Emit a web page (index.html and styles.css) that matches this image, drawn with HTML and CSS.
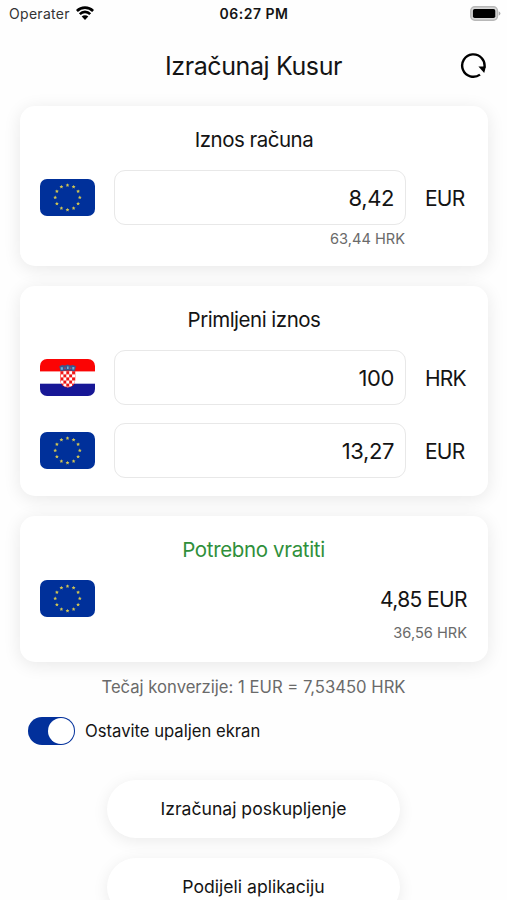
FILE: index.html
```html
<!DOCTYPE html>
<html lang="hr">
<head>
<meta charset="utf-8">
<title>Izračunaj Kusur</title>
<link rel="stylesheet" href="styles.css">
</head>
<body>
<svg class="defs" width="0" height="0" aria-hidden="true">
  <defs>
    <path id="star" d="M0-1.9 .6-.7 1.9-.6 .9.35 1.2 1.6 0 1-1.2 1.6-.9.35-1.9-.6-.6-.7Z"/>
    <symbol id="flag-eu" viewBox="0 0 55 37">
      <rect width="55" height="37" rx="7" fill="#00309a"/>
      <g fill="#d2c552">
        <use href="#star" x="27.5" y="6.2"/><use href="#star" x="33.6" y="7.8"/>
        <use href="#star" x="38.1" y="12.3"/><use href="#star" x="39.8" y="18.5"/>
        <use href="#star" x="38.1" y="24.7"/><use href="#star" x="33.6" y="29.2"/>
        <use href="#star" x="27.5" y="30.8"/><use href="#star" x="21.4" y="29.2"/>
        <use href="#star" x="16.9" y="24.7"/><use href="#star" x="15.2" y="18.5"/>
        <use href="#star" x="16.9" y="12.3"/><use href="#star" x="21.4" y="7.8"/>
      </g>
    </symbol>
    <clipPath id="flag-clip"><rect width="55" height="37" rx="7"/></clipPath>
    <clipPath id="shield"><path d="M20.5 12h14.5v9a7.25 7.25 0 0 1-14.5 0Z"/></clipPath>
    <pattern id="checks" x="20.5" y="12.2" width="5.8" height="6.2" patternUnits="userSpaceOnUse">
      <rect width="5.8" height="6.2" fill="#fff"/>
      <path d="M0 0h2.9v3.1H0ZM2.9 3.1h2.9v3.1H2.9Z" fill="#f01414"/>
    </pattern>
    <symbol id="flag-hr" viewBox="0 0 55 37">
      <g clip-path="url(#flag-clip)">
        <rect width="55" height="37" fill="#fff"/>
        <rect width="55" height="12.4" fill="#fb0404"/>
        <rect y="24.7" width="55" height="12.3" fill="#171796"/>
        <path d="M20.2 12h15.1v9a7.55 7.55 0 0 1-15.1 0Z" fill="#f33"/>
        <rect x="20" y="12" width="16" height="17" fill="url(#checks)" clip-path="url(#shield)"/>
        <path d="M19.2 7.2 22.3 6l2.6.6L27.6 5.6l2.7 1 2.6-.6 3.1 1.2-1.3 5q-7-1.6-14.2 0Z" fill="#38578f"/>
        <path d="M20.7 8.2h2.2v2.5h-2.2ZM27 7.4h1.6v2.6H27ZM32.3 8h2v2.5h-2Z" fill="#6fb5d8"/>
        <path d="M24.3 8.5h1.5v1.6h-1.5ZM29.8 8.5h1.5v1.6h-1.5Z" fill="#b04464"/>
      </g>
    </symbol>
  </defs>
</svg>

<div class="status">
  <div class="status-left">
    <span class="carrier">Operater</span>
    <svg class="wifi" viewBox="0 0 18 14" width="18" height="14">
      <path d="M.9 5a11.6 11.6 0 0 1 16.2 0M3.8 8.1a7.4 7.4 0 0 1 10.4 0" fill="none" stroke="#000" stroke-width="2.7"/>
      <path d="M9 13.9 5.7 10.6a4.7 4.7 0 0 1 6.6 0Z"/>
    </svg>
  </div>
  <span class="time">06:27 PM</span>
  <div class="status-right">
    <svg class="battery" viewBox="0 0 31 15" width="31" height="15">
      <rect x=".8" y=".8" width="26.6" height="13.4" rx="4" fill="#d8d8d8" stroke="#b8b8b8" stroke-width="1.5"/>
      <rect x="2.9" y="2.9" width="22.4" height="9.2" rx="1.8"/>
      <path d="M28.7 5.2q1.7.7 1.7 2.3t-1.7 2.3Z" fill="#aaa"/>
    </svg>
  </div>
</div>

<header class="header">
  <h1 class="title">Izračunaj Kusur</h1>
  <svg class="refresh" viewBox="0 0 26 26" width="26" height="26">
    <path d="M20 21.6A11.2 11.2 0 1 1 24.4 14.5" fill="none" stroke="#000" stroke-width="2.4"/>
    <path d="M18.4 13.4 25.9 13.6 24.2 19.9Z"/>
  </svg>
</header>

<main class="cards">
  <section class="card card-bill">
    <h2 class="label">Iznos računa</h2>
    <div class="row">
      <svg class="flag"><use href="#flag-eu"/></svg>
      <div class="field">8,42</div>
      <span class="currency">EUR</span>
    </div>
    <p class="note note-field"><span>63,44 HRK</span></p>
  </section>

  <section class="card card-received">
    <h2 class="label label-received">Primljeni iznos</h2>
    <div class="row">
      <svg class="flag"><use href="#flag-hr"/></svg>
      <div class="field">100</div>
      <span class="currency">HRK</span>
    </div>
    <div class="row">
      <svg class="flag"><use href="#flag-eu"/></svg>
      <div class="field">13,27</div>
      <span class="currency">EUR</span>
    </div>
  </section>

  <section class="card card-return">
    <h2 class="label label-return">Potrebno vratiti</h2>
    <div class="result">
      <svg class="flag"><use href="#flag-eu"/></svg>
      <span class="amount">4,85 EUR</span>
    </div>
    <p class="note"><span>36,56 HRK</span></p>
  </section>
</main>

<p class="rate"><span>Tečaj konverzije: 1 EUR = 7,53450 HRK</span></p>

<div class="setting">
  <div class="switch"><div class="knob"></div></div>
  <span class="setting-label">Ostavite upaljen ekran</span>
</div>

<div class="actions">
  <div class="button"><span class="button-text">Izračunaj poskupljenje</span></div>
  <div class="button"><span class="button-text">Podijeli aplikaciju</span></div>
</div>
</body>
</html>
```
FILE: styles.css
```css
* { box-sizing: border-box; }
html, body { height: 100%; }
body {
  margin: 0;
  overflow: hidden;
  background: #fefefe;
  color: #141414;
  font-family: Inter, "Liberation Sans", sans-serif;
}
h1, h2, p { margin: 0; font-weight: 400; }
svg { display: block; flex: none; }
.defs { position: absolute; }

.status {
  display: grid;
  grid-template-columns: 1fr auto 1fr;
  align-items: center;
  height: 26px;
  padding: 0 6px 0 9px;
  font-size: 14px;
}
.status-left { display: flex; align-items: center; gap: 6px; }
.status-right { display: flex; justify-content: flex-end; }
.carrier { color: #333; letter-spacing: .3px; }
.time { margin-right: 2px; font-weight: 600; letter-spacing: .5px; }

.header {
  display: grid;
  grid-template-columns: 26px 1fr 26px;
  align-items: center;
  height: 80px;
  padding: 0 21px;
}
.title { grid-column: 2; text-align: center; font-size: 25px; letter-spacing: -.4px; }

.cards { display: grid; gap: 20px; padding: 0 19px 0 20px; }
.card {
  padding: 0 20px;
  border-radius: 15px;
  background: #fff;
  box-shadow: 0 3px 18px rgba(0, 0, 0, .09);
}
.card-bill { height: 160px; }
.card-received { height: 210px; }
.card-return { height: 146px; padding-right: 21px; }
.label { height: 64px; text-align: center; font-size: 20.5px; line-height: 67px; letter-spacing: -.5px; }
.label-return { letter-spacing: -.35px; color: #2f8f3a; }

.row {
  display: grid;
  grid-template-columns: 55px 292px 1fr;
  column-gap: 19px;
  align-items: center;
}
.row + .row { margin-top: 18px; }
.flag { width: 55px; height: 37px; }
.field {
  height: 55px;
  padding-right: 11px;
  border: 1px solid #e8e8e8;
  border-radius: 11px;
  text-align: right;
  font-size: 22px;
  line-height: 54px;
  letter-spacing: -.4px;
}
.currency { padding-top: 1px; font-size: 21px; letter-spacing: -.8px; }
.note { text-align: right; color: #6a6a6a; font-size: 14.6px; line-height: 18px; }
.note-field { padding: 5px 63px 0 0; }

.result { display: flex; align-items: center; justify-content: space-between; height: 37px; }
.amount { padding-top: 1px; font-size: 21px; letter-spacing: -.6px; }
.card-return .note { margin-top: 7px; }

.rate { height: 49px; text-align: center; color: #6a6a6a; font-size: 16.65px; line-height: 50px; }

.setting { display: flex; align-items: center; gap: 10px; height: 40px; padding-left: 28px; }
.switch { width: 47px; height: 28px; padding: 1px; border-radius: 14px; background: #02309b; }
.knob { width: 26px; height: 26px; margin-left: auto; border-radius: 50%; background: #fff; }
.setting-label { font-size: 16.65px; }

.actions { display: grid; justify-content: center; gap: 20px; padding-top: 29px; }
.button {
  width: 293px;
  height: 58px;
  border-radius: 29px;
  background: #fff;
  box-shadow: 0 3px 16px rgba(0, 0, 0, .08);
  text-align: center;
  font-size: 17.6px;
  line-height: 58px;
}
```
